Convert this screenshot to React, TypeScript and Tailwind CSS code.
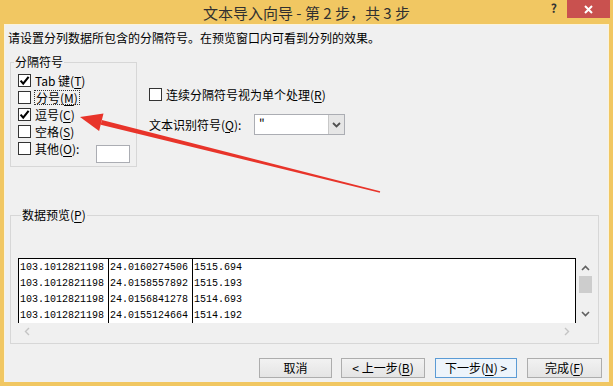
import React from "react";

function Box({ checked }: { checked?: boolean }) {
  return (
    <span className="w-[13px] h-[13px] border border-[#333333] bg-white flex items-center justify-center shrink-0">
      {checked && (
        <svg width="11" height="11" viewBox="0 0 11 11">
          <path d="M1.6 5.6 L4.2 8.6 L9.6 1.8" stroke="#000" strokeWidth="2.1" fill="none" />
        </svg>
      )}
    </span>
  );
}

function Mn({ c }: { c: string }) {
  return (
    <>
      (<span className="underline underline-offset-[2px]">{c}</span>)
    </>
  );
}

const rows = [
  ["103.1012821198", "24.0160274506", "1515.694"],
  ["103.1012821198", "24.0158557892", "1515.193"],
  ["103.1012821198", "24.0156841278", "1514.693"],
  ["103.1012821198", "24.0155124664", "1514.192"],
];

function Btn({ w, children, focus }: { w: string; children: React.ReactNode; focus?: boolean }) {
  return (
    <div
      className={
        "h-[20px] flex items-center justify-center border text-[12px] leading-none " +
        w +
        (focus
          ? " border-[#5b9bd5] bg-[#edf4fb]"
          : " border-[#adadad] bg-gradient-to-b from-[#f2f2f2] to-[#e4e4e4]")
      }
    >
      {children}
    </div>
  );
}

export default function App() {
  return (
    <div className="w-[613px] h-[386px] bg-[#f1c762] flex flex-col relative overflow-hidden font-['Noto_Sans_CJK_SC','Noto_Sans',sans-serif] text-[12px] text-black">
      {/* title bar */}
      <div className="h-[24px] grid grid-cols-[1fr_auto_1fr] shrink-0">
        <div />
        <div className="text-[15px] leading-[24px] pt-[1px] text-[#303030] whitespace-nowrap">
          文本导入向导 - 第 2 步，共 3 步
        </div>
        <div className="flex justify-end items-start pr-[3px]">
          <div className="mt-[1px] mr-[10px] text-[12px] font-bold leading-[14px] text-[#333]">?</div>
          <div className="w-[43px] h-[18px] bg-[#c9514f] flex items-center justify-center">
            <svg width="9" height="9" viewBox="0 0 9 9">
              <path d="M1 1 L8 8 M8 1 L1 8" stroke="#fff" strokeWidth="2" />
            </svg>
          </div>
        </div>
      </div>

      {/* content */}
      <div className="flex-1 ml-[4px] mr-[4px] mb-[4px] bg-[#f0f0f0] border-l border-t border-r border-[#fbf3dc] flex flex-col">
        <div className="pl-[3px] mt-[6px] leading-[14px] whitespace-nowrap">
          请设置分列数据所包含的分隔符号。在预览窗口内可看到分列的效果。
        </div>

        <div className="flex mt-[10px]">
          <fieldset className="ml-[5px] w-[127px] border border-[#d7d7d7] pb-[3px]">
            <legend className="ml-[3px] px-[1px] leading-[14px]">分隔符号</legend>
            <div className="flex flex-col pl-[7px] pr-[6px] mt-[3px]">
              <div className="h-[17px] flex items-center gap-[4px]">
                <Box checked />
                <span className="leading-none">Tab 键<Mn c="T" /></span>
              </div>
              <div className="h-[17px] flex items-center gap-[3px]">
                <Box />
                <span className="leading-[13px] border border-dotted border-[#333] px-[1px]">分号<Mn c="M" /></span>
              </div>
              <div className="h-[17px] flex items-center gap-[4px]">
                <Box checked />
                <span className="leading-none">逗号<Mn c="C" /></span>
              </div>
              <div className="h-[17px] flex items-center gap-[4px]">
                <Box />
                <span className="leading-none">空格<Mn c="S" /></span>
              </div>
              <div className="flex items-start">
                <div className="h-[17px] flex items-center gap-[4px]">
                  <Box />
                  <span className="leading-none">其他<Mn c="O" />:</span>
                </div>
                <div className="ml-auto mt-[5px] w-[34px] h-[18px] bg-white border border-[#abadb3]" />
              </div>
            </div>
          </fieldset>

          <div className="ml-[12px] flex flex-col">
            <div className="mt-[31px] h-[17px] flex items-center gap-[4px]">
              <Box />
              <span className="leading-none">连续分隔符号视为单个处理<Mn c="R" /></span>
            </div>
            <div className="mt-[11px] flex items-center">
              <span className="w-[105px] leading-none whitespace-nowrap">文本识别符号<Mn c="Q" />:</span>
              <div className="w-[91px] h-[21px] bg-white border border-[#abadb3] flex">
                <div className="flex-1 pl-[4px] text-[12px] leading-[16px]">"</div>
                <div className="w-[16px] h-full bg-[#e6e6e6] border-l border-[#c8c8c8] flex items-center justify-center">
                  <svg width="9" height="6" viewBox="0 0 9 6">
                    <path d="M1 1 L4.5 4.5 L8 1" stroke="#505050" strokeWidth="1.8" fill="none" />
                  </svg>
                </div>
              </div>
            </div>
          </div>
        </div>

        <fieldset className="mt-[41px] ml-[5px] mr-[9px] border border-[#d7d7d7] pl-[7px] pr-[4px] pb-[3px]">
          <legend className="ml-[3px] px-[1px] leading-[14px]">数据预览<Mn c="P" /></legend>
          <div className="mt-[36px] flex flex-col">
            <div className="flex h-[65px]">
              <div className="flex-1 bg-white border-t border-l border-r border-black flex font-['Liberation_Mono',monospace] text-[10px]">
                <div className="w-[90px] border-r border-black pt-[1px]">
                  {rows.map((r, i) => (
                    <div key={i} className="h-[16px] leading-[16px] pl-[1px]">{r[0]}</div>
                  ))}
                </div>
                <div className="w-[84px] border-r border-black pt-[1px]">
                  {rows.map((r, i) => (
                    <div key={i} className="h-[16px] leading-[16px] pl-[1px]">{r[1]}</div>
                  ))}
                </div>
                <div className="flex-1 pt-[1px]">
                  {rows.map((r, i) => (
                    <div key={i} className="h-[16px] leading-[16px] pl-[1px]">{r[2]}</div>
                  ))}
                </div>
              </div>
              <div className="w-[18px] flex flex-col items-center">
                <svg className="mt-[7px]" width="9" height="6" viewBox="0 0 9 6">
                  <path d="M1 5 L4.5 1.5 L8 5" stroke="#606060" strokeWidth="1.6" fill="none" />
                </svg>
                <div className="mt-[5px] w-[13px] h-[17px] bg-[#cdcdcd]" />
                <svg className="mt-[18px]" width="9" height="6" viewBox="0 0 9 6">
                  <path d="M1 1 L4.5 4.5 L8 1" stroke="#606060" strokeWidth="1.6" fill="none" />
                </svg>
              </div>
            </div>
            <div className="h-[17px] mr-[18px] flex items-center justify-between px-[6px]">
              <svg width="6" height="9" viewBox="0 0 6 9">
                <path d="M5 1 L1.5 4.5 L5 8" stroke="#c4c4c4" strokeWidth="1.4" fill="none" />
              </svg>
              <svg width="6" height="9" viewBox="0 0 6 9">
                <path d="M1 1 L4.5 4.5 L1 8" stroke="#c4c4c4" strokeWidth="1.4" fill="none" />
              </svg>
            </div>
          </div>
        </fieldset>

        <div className="mt-[14px] flex justify-end pr-[6px]">
          <Btn w="w-[73px]">取消</Btn>
          <div className="w-[9px]" />
          <Btn w="w-[84px]">&lt; 上一步<Mn c="B" /></Btn>
          <div className="w-[10px]" />
          <Btn w="w-[82px]" focus>下一步<Mn c="N" /> &gt;</Btn>
          <div className="w-[10px]" />
          <Btn w="w-[75px]">完成<Mn c="F" /></Btn>
        </div>
      </div>

      {/* red annotation arrow */}
      <svg className="absolute inset-0 pointer-events-none" width="613" height="386" viewBox="0 0 613 386">
        <polygon points="100.7,124.7 101.9,119.9 380.2,191.3 379.8,192.7" fill="#e8342a" />
        <polygon points="80,117 103.5,113.6 99.1,131" fill="#e8342a" />
      </svg>
    </div>
  );
}
